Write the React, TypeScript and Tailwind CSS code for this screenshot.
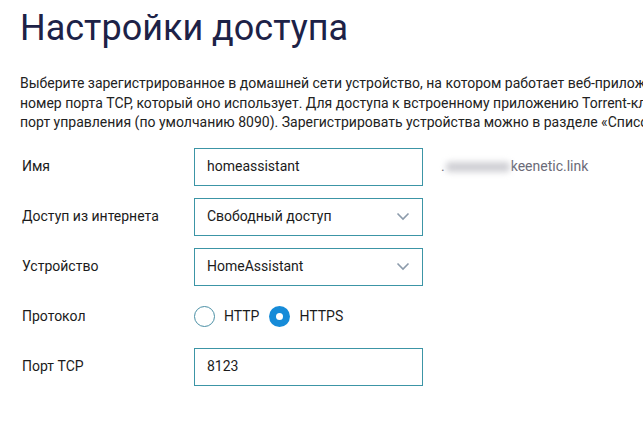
import React from "react";

const font = { fontFamily: "Roboto, 'Liberation Sans', sans-serif" };

function Chevron() {
  return (
    <svg width="14" height="9" viewBox="0 0 14 9" fill="none" className="shrink-0">
      <path d="M1.5 1.5 L7 7 L12.5 1.5" stroke="#8c9bab" strokeWidth="1.6" />
    </svg>
  );
}

function Row({ label, children }: { label: string; children: React.ReactNode }) {
  return (
    <div className="flex h-[38px] items-center">
      <div className="w-[174px] shrink-0 pl-[2px] text-[14px] text-[#1b1b1b]">{label}</div>
      {children}
    </div>
  );
}

function Field({ value, select }: { value: string; select?: boolean }) {
  return (
    <div className="flex h-[38px] w-[229px] items-center justify-between border border-[#3c95a6] bg-white pl-[12px] pr-[12px] text-[14px] text-[#1b1b1b]">
      <span>{value}</span>
      {select && <Chevron />}
    </div>
  );
}

export default function App() {
  return (
    <div className="h-[430px] w-[643px] overflow-hidden bg-white pl-[20px]" style={font}>
      <h1 className="pt-[7px] text-[36px] leading-[42px] font-normal text-[#1d2247]">Настройки доступа</h1>

      {/* описание */}
      <div className="mt-[25px] text-[14px] leading-[19.5px] text-[#222]">
        <p className="whitespace-nowrap">
          Выберите зарегистрированное в домашней сети устройство, на котором работает веб-приложение, и укажите
        </p>
        <p className="whitespace-nowrap">
          номер порта TCP, который оно использует. Для доступа к встроенному приложению Torrent-клиента укажите
        </p>
        <p className="whitespace-nowrap">
          порт управления (по умолчанию 8090). Зарегистрировать устройства можно в разделе «Список устройств».
        </p>
      </div>

      <div className="mt-[15px] flex flex-col gap-[12px]">
        <Row label="Имя">
          <Field value="homeassistant" />
          <div className="ml-[18px] flex items-center text-[14px] text-[#6b6b78]">
            <span>.</span>
            <span className="mx-[1px] inline-block h-[10px] w-[64px] rounded-sm bg-[#cfcfd4] blur-[3px]" />
            <span>keenetic.link</span>
          </div>
        </Row>
        <Row label="Доступ из интернета">
          <Field value="Свободный доступ" select />
        </Row>
        <Row label="Устройство">
          <Field value="HomeAssistant" select />
        </Row>
        <Row label="Протокол">
          <div className="flex items-center text-[14px] text-[#1b1b1b]">
            <span className="h-[21px] w-[21px] rounded-full border-[1.5px] border-[#4a8fa5] bg-white" />
            <span className="ml-[9px]">HTTP</span>
            <span className="ml-[10px] flex h-[21px] w-[21px] items-center justify-center rounded-full bg-[#168bd8]">
              <span className="h-[7px] w-[7px] rounded-full bg-white" />
            </span>
            <span className="ml-[9px]">HTTPS</span>
          </div>
        </Row>
        <Row label="Порт TCP">
          <Field value="8123" />
        </Row>
      </div>
    </div>
  );
}
